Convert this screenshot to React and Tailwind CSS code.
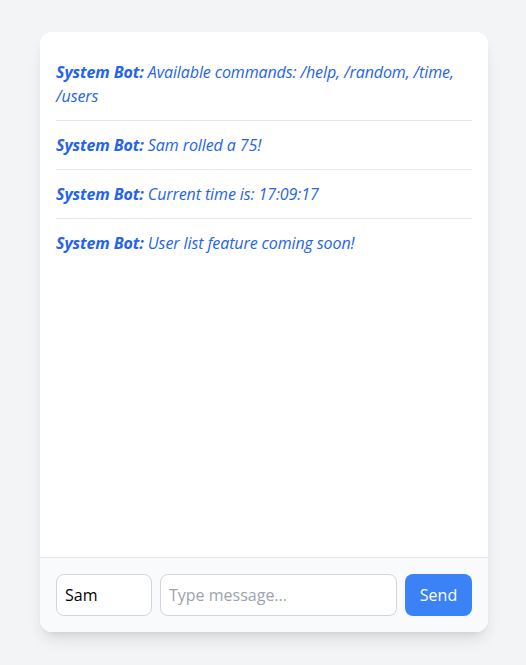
const messages = [
  'Available commands: /help, /random, /time, /users',
  'Sam rolled a 75!',
  'Current time is: 17:09:17',
  'User list feature coming soon!',
]

export default function App() {
  return (
    <div
      className="min-h-screen bg-[#f3f4f6] pt-8 px-10"
      style={{ fontFamily: '"Open Sans", sans-serif' }}
    >
      <div className="w-[448px] h-[600px] bg-white rounded-xl shadow-lg flex flex-col overflow-hidden">
        <div className="flex-1 p-4 overflow-y-auto">
          {messages.map((m, i) => (
            <p
              key={i}
              className={`py-3 text-base leading-6 italic text-[#2563eb] tracking-[-0.1px] ${i < messages.length - 1 ? 'border-b border-[#e5e7eb]' : ''}`}
            >
              <strong className="font-bold">System Bot:</strong> {m}
            </p>
          ))}
        </div>
        <div className="border-t border-[#e5e7eb] bg-[#f9fafb] p-4 flex gap-2">
          <input
            className="w-24 px-2 py-2 text-base leading-6 border border-[#d1d5db] rounded-lg bg-white text-black outline-none"
            defaultValue="Sam"
          />
          <input
            className="flex-1 min-w-0 px-2 py-2 text-base leading-6 border border-[#d1d5db] rounded-lg bg-white outline-none placeholder:text-[#9ca3af]"
            placeholder="Type message..."
          />
          <button className="w-[67px] text-base bg-[#3b82f6] text-white rounded-lg">Send</button>
        </div>
      </div>
    </div>
  )
}
